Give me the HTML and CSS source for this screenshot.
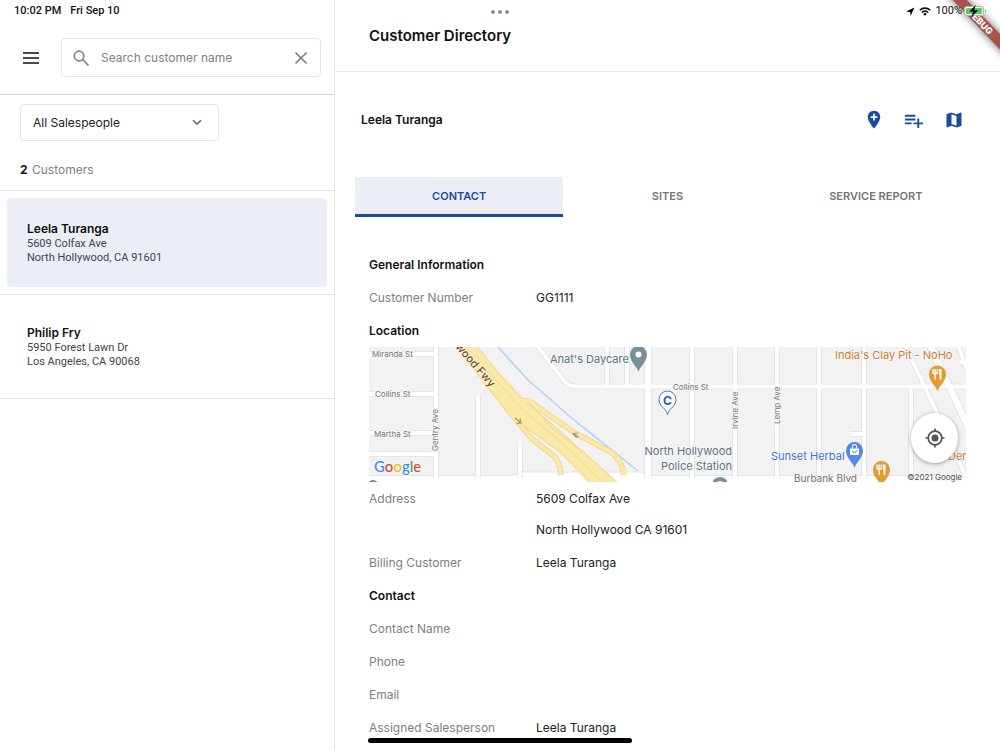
FILE: index.html
```html
<!DOCTYPE html>
<html lang="en">
<head>
<meta charset="utf-8">
<meta name="viewport" content="width=device-width, initial-scale=1">
<title>Customer Directory</title>
<link rel="stylesheet" href="styles.css">
</head>
<body>
<div class="app">
  <div class="status-bar">
    <div class="status-time"><span>10:02 PM</span><span>Fri Sep 10</span></div>
    <svg class="status-dots" width="18" height="6" viewBox="0 0 18 6" aria-hidden="true"><g fill="#8e8e8e"><circle cx="2" cy="3" r="2"/><circle cx="9" cy="3" r="2"/><circle cx="16" cy="3" r="2"/></g></svg>
    <div class="status-icons">
      <svg width="9" height="9" viewBox="0 0 9 9" aria-hidden="true"><path d="M8.500.500 0 4.600l4.200.300.300 4.100z"/></svg>
      <svg width="12" height="9" viewBox="0 0 12 9" aria-hidden="true"><g fill="none" stroke="#111" stroke-width="1.600"><path d="M.8 3.300a7.300 7.300 0 0 1 10.400 0"/><path d="M2.800 5.500a4.500 4.500 0 0 1 6.400 0"/></g><path d="M6 8.800 4.200 7a2.500 2.500 0 0 1 3.600 0z"/></svg>
      <div class="battery">
        <span>100%</span>
        <svg width="23" height="12" viewBox="0 0 23 12" aria-hidden="true"><rect x=".5" y="1.500" width="19" height="9" rx="2.500" fill="#fff" stroke="#a9b5a9"/><rect x="2" y="3" width="16" height="6" rx="1" fill="#5bcb5d"/><path d="M21 4.500q1.200.400 1.200 1.500T21 7.500z" fill="#a0a0a0"/><path d="M11.800 0 5.300 6.600h3.900L7.400 12l6.800-6.700h-4z" fill="#000"/></svg>
      </div>
    </div>
  </div>

  <aside class="sidebar">
    <div class="search-bar">
      <button class="icon-button" aria-label="Menu"><svg width="16" height="12" viewBox="0 0 16 12"><path d="M0 1h16M0 6h16M0 11h16" stroke="#111" stroke-width="1.700"/></svg></button>
      <div class="search-field">
        <svg width="16" height="16" viewBox="0 0 16 16" aria-hidden="true"><g fill="none" stroke="#858585" stroke-width="1.700"><circle cx="6" cy="6" r="4.800"/><path d="m9.500 9.500 6 6"/></g></svg>
        <input type="text" placeholder="Search customer name" aria-label="Search customer name">
        <button class="icon-button" aria-label="Clear"><svg width="12" height="12" viewBox="0 0 12 12"><path d="M.5.500l11 11M11.500.500l-11 11" stroke="#858585" stroke-width="1.600"/></svg></button>
      </div>
    </div>
    <div class="filters">
      <div class="select-wrap">
        <select aria-label="Salesperson"><option>All Salespeople</option></select>
        <svg width="10" height="7" viewBox="0 0 10 7" aria-hidden="true"><path d="m1 1.200 4 4 4-4" fill="none" stroke="#666" stroke-width="1.600"/></svg>
      </div>
      <p class="count"><strong>2</strong> Customers</p>
    </div>
    <ul class="customers">
      <li><button class="customer selected"><strong>Leela Turanga</strong><span>5609 Colfax Ave</span><span>North Hollywood, CA 91601</span></button></li>
      <li><button class="customer"><strong>Philip Fry</strong><span>5950 Forest Lawn Dr</span><span>Los Angeles, CA 90068</span></button></li>
    </ul>
  </aside>

  <main class="detail">
    <header class="title-bar"><h1>Customer Directory</h1></header>
    <div class="customer-bar">
      <h2>Leela Turanga</h2>
      <div class="actions">
        <button class="icon-button" aria-label="Add location"><svg width="20" height="20" viewBox="0 0 24 24" fill="#1d4b9b"><path d="M12 1C7.900 1 4.500 4.300 4.500 8.500 4.500 14 12 22.500 12 22.500S19.500 14 19.500 8.500C19.500 4.300 16.100 1 12 1zm4 8.500h-3v3h-2v-3H8v-2h3v-3h2v3h3v2z"/></svg></button>
        <button class="icon-button" aria-label="Add to list"><svg width="20" height="20" viewBox="2 1 21 21" fill="#1d4b9b"><path d="M14 10H3v2h11v-2zm0-4H3v2h11V6zm4 8v-4h-2v4h-4v2h4v4h2v-4h4v-2h-4zM3 16h7v-2H3v2z"/></svg></button>
        <button class="icon-button" aria-label="Map"><svg width="20" height="20" viewBox="0 0 24 24" fill="#1d4b9b"><path d="m20.500 3-.160.030L15 5.100 9 3 3.360 4.900c-.210.070-.360.250-.360.480V20.500c0 .280.220.500.500.500l.160-.030L9 18.900l6 2.100 5.640-1.900c.210-.070.360-.250.360-.480V3.500c0-.280-.220-.500-.500-.500zM15 19l-6-2.110V5l6 2.110V19z"/></svg></button>
      </div>
    </div>
    <div class="tabs" role="tablist">
      <button role="tab" aria-selected="true" class="tab active">CONTACT</button>
      <button role="tab" aria-selected="false" class="tab">SITES</button>
      <button role="tab" aria-selected="false" class="tab">SERVICE REPORT</button>
    </div>
    <div class="info">
      <h3>General Information</h3>
      <dl><div><dt>Customer Number</dt><dd>GG1111</dd></div></dl>
      <h3>Location</h3>
      <div class="map">
        <svg class="map-art" viewBox="0 0 597 135" preserveAspectRatio="xMidYMid slice" role="img" aria-label="Map of North Hollywood">
          <defs>
            <g id="roads" fill="none" stroke-linejoin="round">
              <path d="M-4 7H67M-4 47H67M-4 86H67M-4 107H67M67-4V131M109 48V131M151 94V131"/>
              <path d="M166-4 196 35Q200 39.500 207 39.500H602M238-4V39M258-4V39M323-4V131M366-4V131M408-4V131M450-4V131M495-4V131M542 39V131M482 87H495"/>
              <path d="M535-4 568 66 597 130M588-4 597 20 604 34M591 15H602"/>
            </g>
            <g id="wide-roads" fill="none">
              <path d="M279-4V131M560-4 602 86"/>
            </g>
            <path id="pin" d="M0 17.500C-1 12-8.500 8-8.500 0a8.500 8.500 0 0 1 17 0C8.500 8 1 12 0 17.500z"/>
          </defs>
          <rect width="597" height="135" fill="#f2f2f2"/>
          <path d="M-2 128.500H143L151 125H273L277 128.500H600V140H-2z" fill="#fff" stroke="#e3e3e3"/>
          <use href="#roads" stroke="#e1e1e1" stroke-width="5.500"/>
          <use href="#wide-roads" stroke="#e1e1e1" stroke-width="8"/>
          <use href="#roads" stroke="#fff" stroke-width="3.800"/>
          <use href="#wide-roads" stroke="#fff" stroke-width="6.300"/>
          <path d="M129 0 159 33 206 74 234 96 269 124" fill="none" stroke="#b0d5fb" stroke-width="1.600"/>
          <g fill="none" stroke-linejoin="round">
            <path d="M110 25 140 64 163 92 186 110Q191 117 192 128M154 54H160L180 68 206 86 240 104Q253 112 255 128" stroke="#efd27d" stroke-width="5.500"/>
            <path d="M86-1 108 26 129 53 148 74 191 105 221 136H249L191 84 156 54 133 30 108-1z" fill="#fae8a6" stroke="#efd27d"/>
            <path d="M110 25 140 64 163 92 186 110Q191 117 192 128M154 54H160L180 68 206 86 240 104Q253 112 255 128" stroke="#fae8a6" stroke-width="4"/>
            <path d="M118 24 155 64 191 94 234 136M160 56 182 80 214 106" stroke="#f1d98c"/>
          </g>
          <path d="m146 71 6 5m-1-4.500 1 4.500-4.500.500M210 90l-6-3m4 4-4-4 5-.800" stroke="#a89b70" fill="none" stroke-width="1.300"/>
          <g class="street">
            <text x="3" y="10">Miranda St</text><text x="6" y="50">Collins St</text><text x="5" y="90">Martha St</text><text x="304" y="43">Collins St</text>
            <text transform="translate(69 104) rotate(-90)">Gentry Ave</text><text transform="translate(369 82) rotate(-90)">Irvine Ave</text><text transform="translate(411 77) rotate(-90)">Lemp Ave</text>
          </g>
          <text class="freeway" transform="translate(86 0) rotate(49)">wood Fwy</text>
          <text class="boulevard" x="425" y="135">Burbank Blvd</text>
          <g class="place">
            <text x="181" y="16">Anat's Daycare</text>
            <text x="363" y="108" text-anchor="end">North Hollywood</text><text x="363" y="123" text-anchor="end">Police Station</text>
            <text class="food" x="466" y="12">India's Clay Pit - NoHo</text><text class="shop" x="402" y="113">Sunset Herbal</text><text class="food" x="579" y="113">Der</text>
          </g>
          <use href="#pin" x="269.500" y="7.500" fill="#788f9c"/><circle cx="269.500" cy="7.500" r="3" fill="#fff"/>
          <circle cx="351" cy="138" r="8" fill="#788f9c"/><circle cx="351" cy="137" r="3" fill="#fff"/><circle cx="4" cy="139" r="6" fill="#788f9c"/>
          <use href="#pin" x="568.500" y="27" fill="#e39b34"/><use href="#pin" x="512.500" y="122.500" fill="#e39b34"/><use href="#pin" x="485.500" y="103.500" fill="#5587ea"/>
          <g id="fork" stroke="#fff" stroke-width="1.400" fill="none"><path d="M564 22v3q0 2 2.200 2t2.200-2v-3M566.200 22v10.500"/><path d="M571.500 22v10.500M571 22v6" stroke-width="1.800"/></g>
          <use href="#fork" x="-56" y="95.500"/>
          <path d="M481 101.500h9v6.500h-9z" fill="#fff"/><path d="M483.500 101.500v-2a2 2 0 0 1 4 0v2" fill="none" stroke="#fff" stroke-width="1.200"/><path d="M483.500 103.500a2 2 0 0 0 4 0" fill="none" stroke="#5587ea"/>
          <path d="M298.500 67.500C297 61 290 59.500 290 52.500a8.500 8.500 0 0 1 17 0c0 7-7 8.500-8.500 15z" fill="#fff" stroke="#4777b8"/>
          <text class="pin-letter" x="298.500" y="58" text-anchor="middle">C</text>
          <text class="google" x="5" y="125"><tspan fill="#4285f4">G</tspan><tspan fill="#ea4335">o</tspan><tspan fill="#fbbc05">o</tspan><tspan fill="#4285f4">g</tspan><tspan fill="#34a853">l</tspan><tspan fill="#ea4335">e</tspan></text>
          <text class="copyright" x="593" y="133" text-anchor="end">©2021 Google</text>
        </svg>
        <button class="locate" aria-label="My location"><svg width="20" height="20" viewBox="0 0 20 20"><circle cx="10" cy="10" r="6.800" fill="none" stroke="#555" stroke-width="1.700"/><circle cx="10" cy="10" r="3.500" fill="#555"/><path d="M10 .5v3M10 16.500v3M.5 10h3M16.500 10h3" stroke="#555" stroke-width="1.700"/></svg></button>
      </div>
      <dl>
        <div class="address"><dt>Address</dt><dd>5609 Colfax Ave<br>North Hollywood CA 91601</dd></div>
        <div><dt>Billing Customer</dt><dd>Leela Turanga</dd></div>
      </dl>
      <h3>Contact</h3>
      <dl>
        <div><dt>Contact Name</dt><dd></dd></div>
        <div><dt>Phone</dt><dd></dd></div>
        <div><dt>Email</dt><dd></dd></div>
        <div><dt>Assigned Salesperson</dt><dd>Leela Turanga</dd></div>
      </dl>
    </div>
  </main>

  <svg class="debug-ribbon" width="60" height="60" viewBox="0 0 60 60">
    <defs><filter id="ribbon-shadow" x="-30%" y="-30%" width="160%" height="160%"><feDropShadow dx="0" dy="0" stdDeviation="4" flood-opacity=".6"/></filter></defs>
    <path d="M5-8 68 58V42L19-8z" fill="#a4544f" filter="url(#ribbon-shadow)"/>
    <text x="38" y="24" transform="rotate(46 38 24)" text-anchor="middle">DEBUG</text>
  </svg>
  <div class="home-indicator"></div>
</div>
</body>
</html>
```

FILE: styles.css
```css
* { box-sizing: border-box; }
body, h1, h2, h3, p, ul, dl, dd { margin: 0; }
body { background: #fff; color: #222; font: 12px/18px Inter, "Liberation Sans", sans-serif; }
button, input, select { font: inherit; color: inherit; background: none; border: 0; padding: 0; }
ul { list-style: none; padding: 0; }
svg { display: block; flex: none; }

.app { position: relative; display: flex; height: 100vh; overflow: hidden; }

.status-bar { position: absolute; z-index: 3; top: 0; left: 0; right: 0; height: 22px; padding: 0 13px 0 14px; display: flex; align-items: center; justify-content: space-between; font-family: Roboto, sans-serif; font-size: 11px; color: #111; pointer-events: none; }
.status-time { display: flex; gap: 9px; font-weight: 500; }
.status-dots { position: absolute; left: 50%; top: 9px; margin-left: -9px; }
.status-icons { display: flex; align-items: center; gap: 4px; }
.battery { display: flex; align-items: center; gap: 2px; }

.sidebar { flex: 0 0 335px; min-width: 0; border-right: 1px solid #e6e6e6; }
.search-bar { display: flex; align-items: center; gap: 22px; padding: 38px 13px 17px 23px; border-bottom: 1px solid #d4d4d4; }
.icon-button { display: flex; align-items: center; justify-content: center; }
.search-field { flex: 1; min-width: 0; display: flex; align-items: center; gap: 12px; height: 39px; padding: 0 13px 0 11px; border: 1px solid #e4e4e4; border-radius: 4px; }
.search-field input { flex: 1; min-width: 0; outline: 0; }
.search-field input::placeholder { color: #808080; opacity: 1; }
.filters { padding: 9px 20px 11px; border-bottom: 1px solid #e6e6e6; }
.select-wrap { width: 199px; height: 37px; display: grid; align-items: center; border: 1px solid #e4e4e4; border-radius: 4px; }
.select-wrap > * { grid-area: 1 / 1; }
.select-wrap select { appearance: none; height: 100%; padding: 0 12px; }
.select-wrap svg { justify-self: end; margin-right: 16px; pointer-events: none; }
.count { margin-top: 20px; color: #808080; }
.count strong { color: #111; margin-right: 1px; }
.customers li { padding: 7px; border-bottom: 1px solid #e6e6e6; }
.customer { display: flex; flex-direction: column; justify-content: center; width: 100%; height: 89px; padding: 0 20px; border-radius: 4px; text-align: left; font-family: Roboto, sans-serif; font-size: 11px; line-height: 14px; color: #444; }
.customer strong { font-family: Inter, sans-serif; font-size: 12px; line-height: 16px; font-weight: 600; color: #111; }
.customer.selected { background: #ebeef6; }

.detail { flex: 1; min-width: 0; }
.title-bar { height: 72px; padding: 0 34px; display: flex; align-items: center; border-bottom: 1px solid #ececec; }
h1 { font-size: 15px; line-height: 24px; font-weight: 600; color: #111; }
.customer-bar { display: flex; align-items: center; justify-content: space-between; height: 96px; margin-bottom: 9px; padding: 0 36px 0 26px; }
h2, h3 { font-size: 12px; font-weight: 600; color: #111; }
.actions { display: flex; gap: 20px; }
.tabs { display: flex; padding: 0 20px; }
.tab { flex: 1; height: 40px; border-bottom: 3px solid transparent; font-size: 11px; font-weight: 600; color: #757575; }
.tab.active { background: #ebeef6; color: #1d4b9b; border-color: #1d4b9b; }
.info { padding: 31px 34px 0; }
h3, dl > div { line-height: 33px; }
dl > div { display: grid; grid-template-columns: 167px 1fr; }
dt { color: #808080; }
.address { padding: 1px 0; }
dl > .address { line-height: 31px; }

.map { position: relative; height: 135px; }
.map-art { width: 100%; height: 100%; }
.map-art text { paint-order: stroke; stroke: #f6f6f6; stroke-width: 2px; }
.street { font-size: 8px; fill: #777; }
.map-art .freeway { font-size: 11px; font-weight: 500; fill: #6d4b2c; stroke: #fdf3cf; }
.boulevard { font-size: 10px; fill: #777; }
.place { font-size: 11px; fill: #607481; }
.food { fill: #cf8030; }
.shop { fill: #4475d8; }
.map-art .pin-letter { font-size: 12px; font-weight: 700; fill: #2a5ba5; stroke: none; }
.google { font: 500 15px Lato, sans-serif; }
.copyright { font-size: 8px; fill: #555; }
.locate { position: absolute; right: 8px; bottom: 19px; width: 47px; height: 50px; display: grid; place-items: center; background: #fff; border-radius: 50%; box-shadow: 0 1px 4px rgba(0, 0, 0, .35); }

.debug-ribbon { position: absolute; z-index: 2; top: 0; right: 0; }
.debug-ribbon text { font-size: 9px; font-weight: 800; fill: #fff; }
.home-indicator { position: absolute; left: 50%; bottom: 7px; width: 264px; height: 5px; margin-left: -132px; border-radius: 3px; background: #000; }
```
